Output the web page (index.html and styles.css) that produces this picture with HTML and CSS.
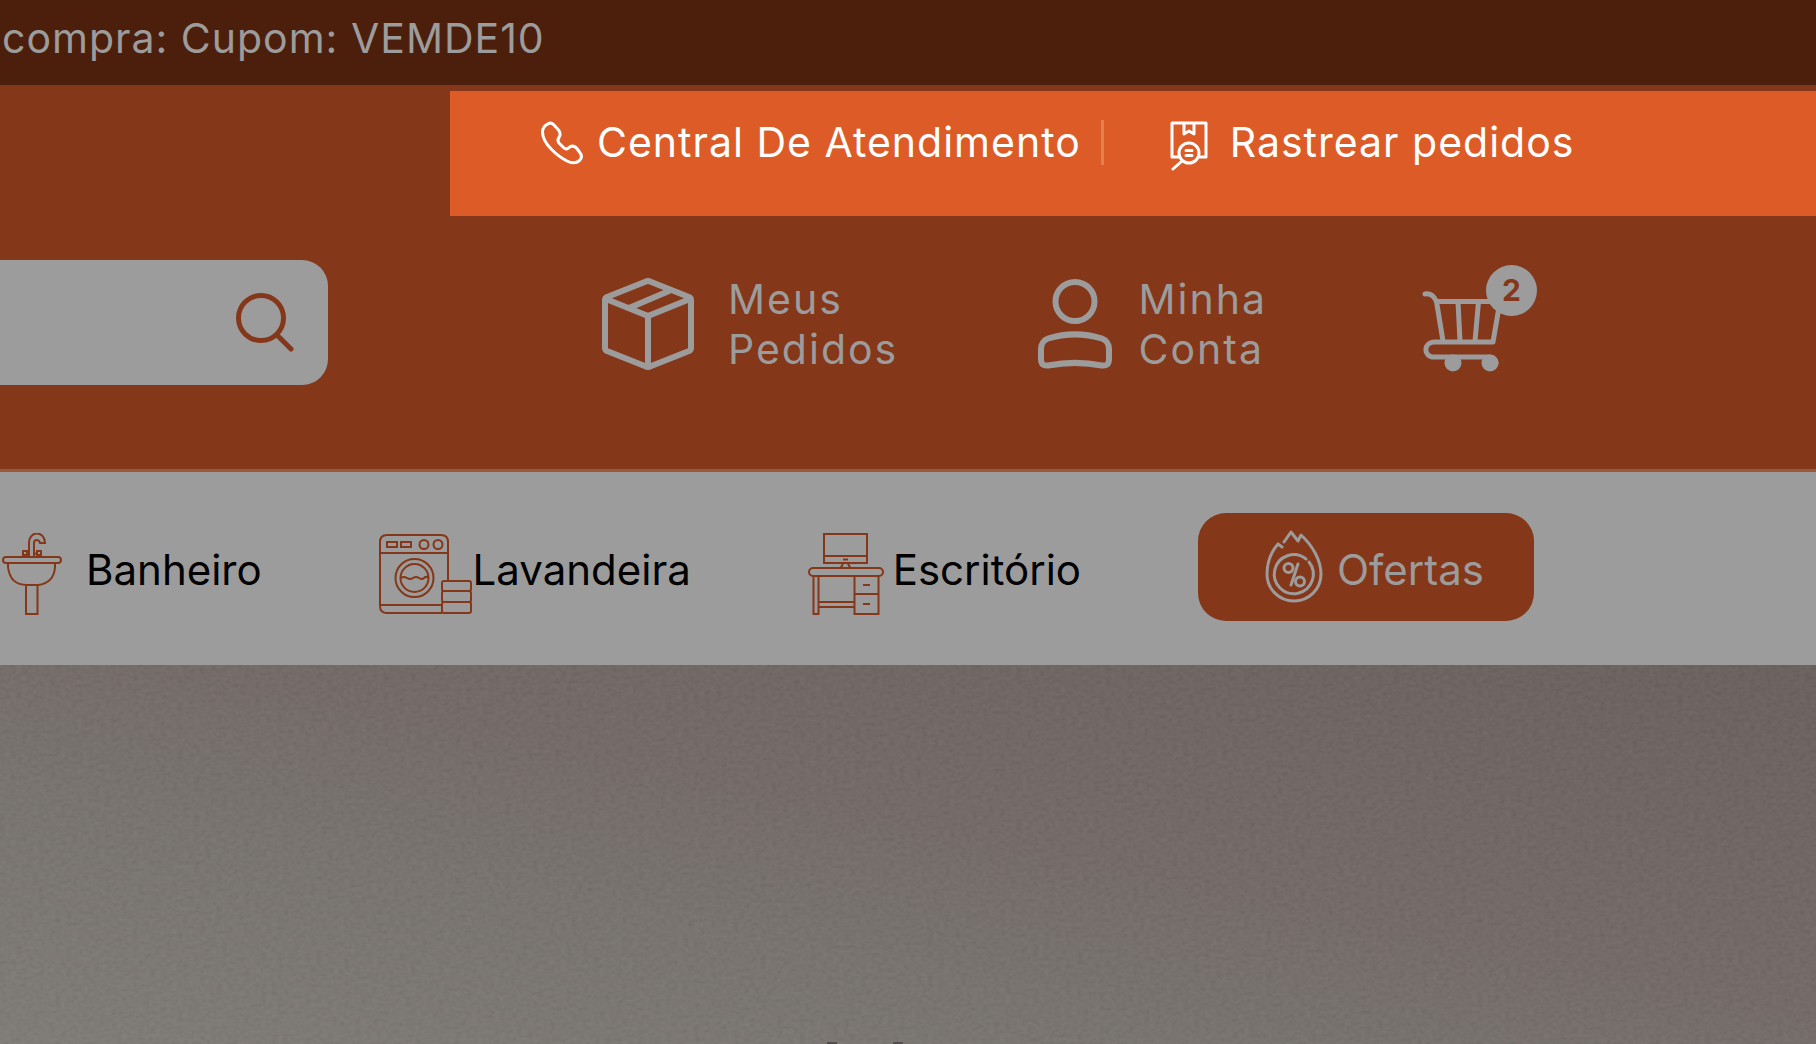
FILE: index.html
```html
<!DOCTYPE html>
<html lang="pt-BR">
<head>
    <meta charset="UTF-8">
    <meta name="viewport" content="width=device-width, initial-scale=1.0">
    <title>Central de Atendimento</title>
    <link rel="stylesheet" href="styles.css">
</head>
<body>
    <!-- Coupon bar -->
    <div class="coupon-bar">compra: Cupom: VEMDE10</div>

    <header class="header">
        <!-- Service links -->
        <nav class="service-links" aria-label="Atendimento">
            <a class="service-link" href="#">
                <svg class="phone-icon" viewBox="0 0 44 44" fill="none" stroke="currentColor" stroke-width="3" stroke-linejoin="round">
                    <path d="M1.500 11C1.500 7 4.500 4 7 2.800C8.500 2 11 2 12.500 3.500L17.500 9C20 12 19.500 14 18 16.500C16.500 18.500 16.500 20 18 22L22.500 26.500C24.500 28.500 25.500 28.500 27.500 27C30 24.500 33 24.800 35.500 27L38.500 31C41 34 41 37 38.500 39.500C35 42.500 31 42.500 26 40C17 35.500 1.500 23 1.500 11Z"/>
                </svg>
                <span>Central De Atendimento</span>
            </a>
            <span class="divider"></span>
            <a class="service-link track-link" href="#">
                <svg class="track-icon" viewBox="0 0 38 50" fill="none" stroke="currentColor" stroke-width="3" stroke-linecap="round" stroke-linejoin="round">
                    <path d="M9 36H2V2H36V36H29M14 3V13L19 10L24 13V3"/>
                    <circle cx="19" cy="32" r="10"/>
                    <path d="M16 29.500H22M16 34.500H22M12 40L3 48"/>
                </svg>
                <span>Rastrear pedidos</span>
            </a>
        </nav>

        <!-- Search and account -->
        <div class="main-row">
            <form class="search">
                <input class="search-input" type="text" aria-label="Buscar">
                <button class="search-button" type="button" aria-label="Buscar">
                    <svg class="search-icon" viewBox="0 0 58 60" fill="none" stroke="currentColor" stroke-width="5" stroke-linecap="round">
                        <circle cx="25" cy="25" r="22.500"/>
                        <path d="M41.500 42.500L55 56"/>
                    </svg>
                </button>
            </form>
            <a class="account-link orders-link" href="#">
                <svg class="box-icon" viewBox="0 0 92 92" fill="none" stroke="currentColor" stroke-width="6" stroke-linecap="round" stroke-linejoin="round">
                    <path d="M44 3.500Q46 2.500 48 3.500L87 19Q89 20 89 22V70Q89 72 87 73L48 88.500Q46 89.500 44 88.500L5 73Q3 72 3 70V22Q3 20 5 19Z"/>
                    <path d="M4 21L46 38L88 21M46 38V88M27 30L67 13"/>
                </svg>
                <span>Meus<br>Pedidos</span>
            </a>
            <a class="account-link profile-link" href="#">
                <svg class="user-icon" viewBox="0 0 74 90" fill="none" stroke="currentColor" stroke-width="6" stroke-linejoin="round">
                    <circle cx="37" cy="22.500" r="19.500"/>
                    <path d="M3 70C3 65 6 61 10 59.500C28 54 46 54 64 59.500C68 61 71 65 71 70V80C71 85 69 87 64 86.500C46 83 28 83 10 86.500C5 87 3 85 3 80Z"/>
                </svg>
                <span>Minha<br>Conta</span>
            </a>
            <a class="cart-link" href="#" aria-label="Carrinho">
                <svg class="cart-icon" viewBox="0 0 80 82" fill="none" stroke="currentColor" stroke-width="5" stroke-linecap="round" stroke-linejoin="round">
                    <path d="M3 4C9 3 12 6 14.500 11.500H78L71 52H13C1 52 1 67 12 67H67Q73 67 74 73M14.500 11.500L21 51M36 12L38 51M56.500 12L53 51"/>
                    <circle cx="31" cy="73" r="8.500" fill="currentColor" stroke="none"/>
                    <circle cx="68" cy="73" r="8.500" fill="currentColor" stroke="none"/>
                </svg>
                <span class="cart-count">2</span>
            </a>
        </div>
    </header>

    <!-- Categories -->
    <nav class="categories" aria-label="Categorias">
        <a class="category bathroom" href="#">
            <svg class="sink-icon" viewBox="0 0 60 82" fill="none" stroke="currentColor" stroke-width="2">
                <rect x="1" y="24" width="58" height="6" rx="3"/>
                <path d="M6 30V34Q8 52 25 52H36Q52 50 53 34V30M24 52V81H35.500V52M27 24V9C28 -3 43 -2 43 10H38C37 6 32 6 32 10V24M27 20.500H25M32 20.500H35"/>
                <rect x="21" y="18" width="4" height="4"/>
                <rect x="35" y="18" width="4" height="4"/>
            </svg>
            <span>Banheiro</span>
        </a>
        <a class="category" href="#">
            <svg class="washer-icon" viewBox="0 0 94 80" fill="none" stroke="currentColor" stroke-width="2">
                <path d="M63 79H8Q1 79 1 72V8Q1 1 8 1H62Q69 1 69 8V46M1 19H69M1 71H63"/>
                <rect x="8" y="8" width="10" height="5"/>
                <rect x="22" y="8" width="10" height="5"/>
                <circle cx="45" cy="10.500" r="4.500"/>
                <circle cx="59" cy="10.500" r="4.500"/>
                <circle cx="35.500" cy="44" r="19"/>
                <circle cx="35.500" cy="44" r="14"/>
                <path d="M22 44Q25 42 28 44T34 44T40 44T45 44T49.500 43.500"/>
                <rect x="63" y="47" width="29" height="10" rx="2"/>
                <rect x="63" y="57" width="29" height="11" rx="2"/>
                <rect x="63" y="68" width="29" height="11" rx="2"/>
            </svg>
            <span>Lavandeira</span>
        </a>
        <a class="category office" href="#">
            <svg class="desk-icon" viewBox="0 0 76 82" fill="none" stroke="currentColor" stroke-width="2">
                <rect x="16" y="1" width="43" height="29"/>
                <path d="M16 23H59M35 26.500H40M35 30Q34 34 32 35M40 30Q41 34 43 35"/>
                <rect x="1" y="35" width="74" height="8" rx="4"/>
                <path d="M5.500 43V81H10.500V43M46.500 43V81H70.500V43M46.500 61H70.500M10.500 69H46.500M10.500 74H46.500M55 52H62M55 71H62"/>
            </svg>
            <span>Escritório</span>
        </a>
        <a class="offers" href="#">
            <svg class="flame-icon" viewBox="0 0 58 74" fill="none" stroke="currentColor" stroke-width="3" stroke-linecap="round" stroke-linejoin="round">
                <path d="M17 17L13 14C6 22 2 33 2 44C2 59 14 71 29 71C44 71 56 59 56 44C56 30 47 15 36 5L33 11L26 2L19 12"/>
                <path d="M41 29A19.500 19.500 0 1 0 44 32M33 34L26 55"/>
                <circle cx="23.500" cy="38" r="4.500"/>
                <circle cx="35" cy="51.500" r="4.500"/>
            </svg>
            <span>Ofertas</span>
        </a>
    </nav>

    <!-- Banner -->
    <main class="banner">
        <svg class="banner-grain" aria-hidden="true">
            <filter id="grain" x="0" y="0" width="100%" height="100%">
                <feTurbulence type="fractalNoise" baseFrequency="0.18 0.26" numOctaves="2" seed="4"/>
                <feColorMatrix type="matrix" values="1 0 0 0 0  1 0 0 0 0  1 0 0 0 0  0 0 0 0 1"/>
            </filter>
            <rect width="100%" height="100%" filter="url(#grain)"/>
        </svg>
        <span class="banner-mark"></span>
        <span class="banner-mark"></span>
    </main>
</body>
</html>
```
FILE: styles.css
```css
* {
    box-sizing: border-box;
}
body {
    margin: 0;
    min-height: 100vh;
    display: flex;
    flex-direction: column;
    background-color: #9c9c9c;
    color: #9c9c9c;
    font-family: "Inter", sans-serif;
    font-size: 41px;
    line-height: 50px;
}
a {
    color: inherit;
    text-decoration: none;
    white-space: nowrap;
}
svg {
    display: block;
    flex-shrink: 0;
}
/* Coupon bar */
.coupon-bar {
    padding: 13px 2px 22px;
    background-color: #4c1f0c;
    letter-spacing: 1px;
}
/* Header */
.header {
    padding-top: 6px;
    background-color: #853719;
    border-bottom: 3px solid #955a3f;
}
.service-links {
    display: flex;
    align-items: flex-start;
    height: 125px;
    margin-left: 450px;
    padding: 26px 0 0 91px;
    background-color: #dc5b26;
    color: #fff;
    letter-spacing: 1px;
}
.service-link {
    display: flex;
    align-items: flex-start;
    gap: 12px;
}
.divider {
    width: 3px;
    height: 45px;
    margin: 3px 66px 0 20px;
    background-color: #e4814f;
}
.track-link {
    gap: 22px;
}
.phone-icon {
    width: 44px;
    height: 44px;
    margin-top: 4px;
}
.track-icon {
    width: 38px;
    height: 50px;
    margin-top: 4px;
}
/* Search and account */
.main-row {
    display: flex;
    align-items: center;
    padding: 44px 314px 84px 0;
}
.search {
    display: flex;
    align-items: center;
    width: 328px;
    height: 125px;
    padding-right: 34px;
    border-radius: 0 26px 26px 0;
    background-color: #9c9c9c;
}
.search-input {
    flex: 1;
    min-width: 0;
    height: 100%;
    border: none;
    background: none;
    font: inherit;
}
.search-button {
    padding: 0;
    border: none;
    background: none;
    color: #853719;
    cursor: pointer;
}
.search-icon {
    width: 58px;
    height: 60px;
}
.account-link {
    display: flex;
    align-items: center;
    padding-top: 3px;
    letter-spacing: 2px;
}
.orders-link {
    gap: 34px;
    margin-left: 274px;
}
.profile-link {
    gap: 27px;
    margin-left: auto;
}
.box-icon {
    width: 92px;
    height: 92px;
}
.user-icon {
    width: 74px;
    height: 90px;
}
.cart-link {
    position: relative;
    margin-left: 155px;
    padding-top: 17px;
}
.cart-icon {
    width: 80px;
    height: 82px;
}
.cart-count {
    position: absolute;
    top: -8px;
    right: -35px;
    width: 51px;
    height: 51px;
    border-radius: 50%;
    background-color: #9c9c9c;
    color: #853719;
    font-size: 30px;
    font-weight: 700;
    text-align: center;
}
/* Categories */
.categories {
    display: flex;
    align-items: center;
    justify-content: space-between;
    height: 193px;
    padding: 0 282px 3px 2px;
    background-color: #9c9c9c;
    color: #853719;
    font-size: 42px;
}
.categories span {
    padding-top: 6px;
}
.category {
    display: flex;
    align-items: center;
}
.category span {
    color: #000;
}
.category svg {
    margin-top: 14px;
}
.bathroom {
    gap: 24px;
}
.office {
    gap: 9px;
}
.sink-icon {
    width: 60px;
    height: 82px;
}
.washer-icon {
    width: 94px;
    height: 80px;
}
.desk-icon {
    width: 76px;
    height: 82px;
}
.offers {
    display: flex;
    align-items: center;
    gap: 14px;
    padding: 17px 50px 17px 67px;
    border-radius: 28px;
    background-color: #853719;
    color: #9c9c9c;
}
.flame-icon {
    width: 58px;
    height: 74px;
}
/* Banner */
.banner {
    position: relative;
    flex: 1;
    display: flex;
    align-items: flex-end;
    justify-content: center;
    gap: 56px;
    padding-right: 86px;
    background: linear-gradient(12deg, #7b7772 0%, #736e69 35%, #6f6562 55%, #655a58 100%);
}
.banner-grain {
    position: absolute;
    top: 0;
    left: 0;
    width: 100%;
    height: 100%;
    opacity: 0.08;
}
.banner-mark {
    width: 10px;
    height: 2px;
    background-color: #4c4545;
}
```
